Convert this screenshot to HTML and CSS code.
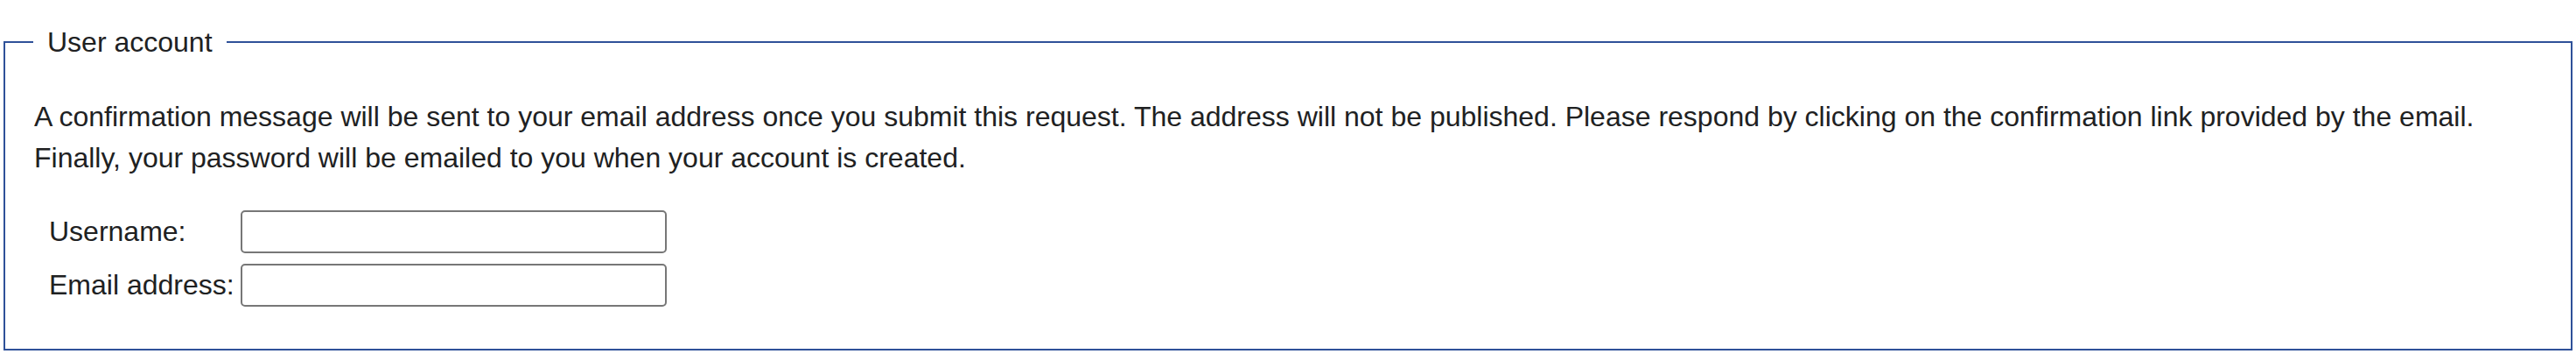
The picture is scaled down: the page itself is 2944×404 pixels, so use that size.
FILE: index.html
```html
<!DOCTYPE html>
<html lang="en">
<head>
<meta charset="utf-8">
<title>User account</title>
<link rel="stylesheet" href="styles.css">
</head>
<body>
<form class="form">
  <fieldset class="account">
    <legend class="account-legend">User account</legend>
    <p class="intro">A confirmation message will be sent to your email address once you submit this request. The address will not be published. Please respond by clicking on the confirmation link provided by the email.<br>Finally, your password will be emailed to you when your account is created.</p>
    <div class="fields">
      <label class="field-label" for="username">Username:</label>
      <input class="field-input" id="username" type="text">
      <label class="field-label" for="email">Email address:</label>
      <input class="field-input" id="email" type="text">
    </div>
  </fieldset>
</form>
</body>
</html>
```
FILE: styles.css
```css
html, body {
  margin: 0;
  padding: 0;
  background: #ffffff;
}
body {
  font-family: "Liberation Sans", Arial, Helvetica, sans-serif;
  color: #202122;
  font-size: 32px;
}
.form {
  margin: 0;
  padding: 30px 4px 4px;
}
.account {
  margin: 0;
  padding: 0 33px 48px;
  border: 2px solid #2f5199;
  min-width: 0;
}
.account-legend {
  font-size: 32px;
  padding: 0 16px;
  margin-left: -1px;
  line-height: 36px;
}
.intro {
  margin: 44px 0 0;
  line-height: 47px;
}
.fields {
  display: grid;
  grid-template-columns: max-content 487px;
  column-gap: 7px;
  row-gap: 12px;
  align-items: center;
  margin-top: 36px;
  padding-left: 17px;
}
.field-label {
  line-height: 37px;
}
.field-input {
  box-sizing: border-box;
  height: 49px;
  margin: 0;
  border: 2px solid #777777;
  border-radius: 5px;
  background: #ffffff;
  font: inherit;
  padding: 0 8px;
}
```
